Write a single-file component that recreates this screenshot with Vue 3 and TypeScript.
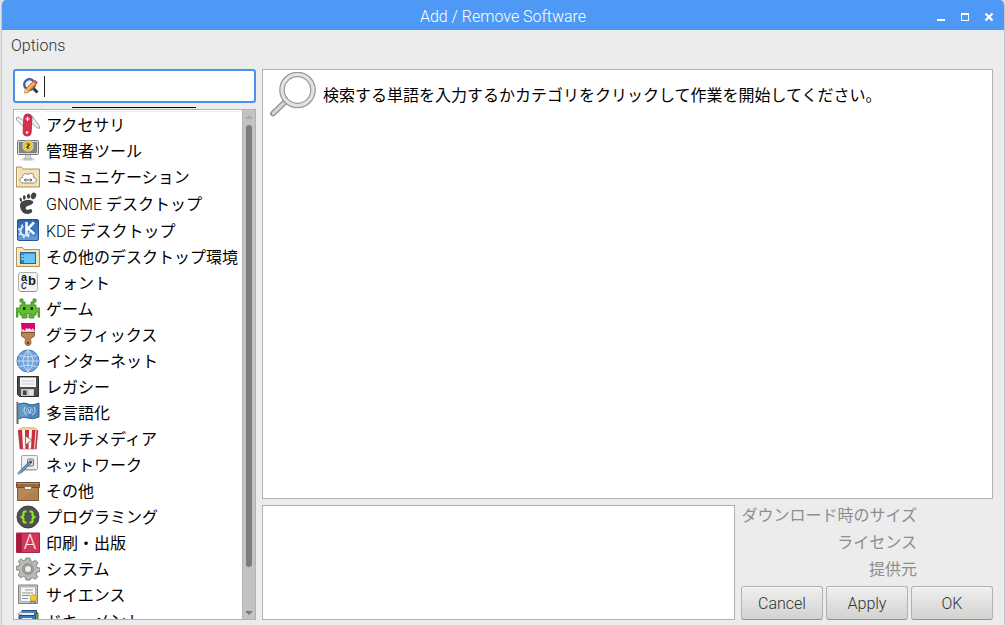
<script setup lang="ts">
import { ref } from 'vue'

interface Category {
  label: string
  icon: string
  prefix?: string
}

const query = ref('')

const categories: Category[] = [
  {
    label: 'アクセサリ',
    icon: `<path d="M.5 4.500 2 4l8 5v6l-4-2.500L.5 7z" fill="#eceeec" stroke="#8d918e" stroke-width=".8"/>
      <path d="M14 6l2-3 7.500 10v2.500l-3-1L14 9z" fill="#eceeec" stroke="#8d918e" stroke-width=".8"/>
      <rect x="7.500" y="1" width="8" height="22" rx="4" transform="rotate(3 11 12)" fill="#dc2f50" stroke="#9d213b" stroke-width=".8"/>
      <path d="M11.500 4v4M9.500 6h4" stroke="#fff" stroke-width="1.200"/><circle cx="11" cy="19.500" r="1.200" fill="#fff"/>`,
  },
  {
    label: '管理者ツール',
    icon: `<ellipse cx="12" cy="20.500" rx="7" ry="1.300" fill="#d2d2d2"/><path d="M9.500 15h5v3l1.500 2H8l1.500-2z" fill="#d5d8d4" stroke="#999" stroke-width=".6"/>
      <rect x="1.500" y="1.500" width="21" height="14" rx="1" fill="#d6d8d4" stroke="#777a76"/><rect x="3.500" y="3.500" width="17" height="10" fill="#80837f" stroke="#5c5f5b" stroke-width=".6"/>
      <circle cx="12" cy="7" r="5.800" fill="#e4e5df" stroke="#9a9c98" stroke-width=".6"/><circle cx="12" cy="7" r="4.300" fill="#f4d634" stroke="#bd9a0d" stroke-width=".7"/><path d="M10.500 5h2.500v1.500L11 8l.5 1h2" fill="none" stroke="#222" stroke-width="1.200"/>`,
  },
  {
    label: 'コミュニケーション',
    icon: `<path d="M.5 22v-20h5l1.500 2h16.500v18z" fill="#f3e2b7" stroke="#ae925c"/><path d="M1.500 21v-18" stroke="#fff5d9"/>
      <path d="M7 18c-4 0-4-5-.5-5.500 0-3.500 3-5 5.500-3 3-2.500 6.500-.5 5.500 3 4 .5 3.500 5.500 0 5.500z" fill="#fff" stroke="#8f8571"/><path d="M8.500 15h7.500M10 13.500 8.500 15l1.500 1.500M14.500 13.500 16 15l-1.500 1.500" fill="none" stroke="#555"/>`,
  },
  {
    label: 'デスクトップ',
    prefix: 'GNOME',
    icon: `<g fill="#414543"><ellipse cx="17.500" cy="3.800" rx="2.600" ry="3.400" transform="rotate(22 17.500 3.800)"/><ellipse cx="12.500" cy="4.300" rx="1.600" ry="2.500"/><ellipse cx="8.300" cy="5.500" rx="1.400" ry="2.200"/><ellipse cx="4.800" cy="7.700" rx="1.200" ry="2" transform="rotate(-15 4.800 7.700)"/>
      <path d="M15.500 8.500C9 7 3.500 9.500 4 14c.5 4.500 3 8 7.500 8 4.500 0 6.500-4 3-5-2 0-2.500 1.500-4 .5-2-1.500 0-3.500 2.500-4 4-1 6-4 2.500-5z"/></g>`,
  },
  {
    label: 'デスクトップ',
    prefix: 'KDE',
    icon: `<defs><linearGradient id="kde" x2="0" y2="1"><stop stop-color="#285da8"/><stop offset="1" stop-color="#649fdc"/></linearGradient></defs>
      <rect x="1.500" y=".5" width="21" height="21" rx="1.500" fill="url(#kde)" stroke="#275497"/>
      <circle cx="9" cy="12" r="4.500" fill="none" stroke="#e2ecf9" stroke-width="2"/><circle cx="9" cy="12" r="6.200" fill="none" stroke="#e2ecf9" stroke-width="1.800" stroke-dasharray="2 2.900"/>
      <path d="M10 2v13M18.500 2.500 12 9l8 6" fill="none" stroke="#3872b8" stroke-width="5"/><path d="M10.500 3v12M18 3.500l-6 6 6.500 5.500" fill="none" stroke="#fff" stroke-width="2.500"/>`,
  },
  {
    label: 'その他のデスクトップ環境',
    icon: `<path d="M.5 21.500v-19h6l1.500 2h15.500v17z" fill="#f3e2b7" stroke="#ae925c"/><path d="M1.500 20.500v-17" stroke="#fff5d9"/>
      <rect x="4.500" y="7.500" width="15" height="11" fill="#65c5fa" stroke="#27648d"/><path d="M4 8h16" stroke="#3c6b89"/><path d="M5 9h3v9H5z" fill="#2d84bc"/><path d="M5.500 11h2M5.500 14h2" stroke="#d7f2ff" stroke-width="1.400"/>`,
  },
  {
    label: 'フォント',
    icon: `<rect x="2.500" y="1.500" width="19" height="19" rx="2.500" fill="#f3f3f3" stroke="#b0b0b0"/><path d="M4 20.500h16" stroke="#969696"/>
      <text font-family="Liberation Sans, sans-serif" font-size="11" font-weight="bold" fill="#191919"><tspan x="5" y="10">a</tspan><tspan x="12" y="14" font-size="13">b</tspan><tspan x="5" y="18" font-size="12" font-weight="normal" font-style="italic">c</tspan></text>`,
  },
  {
    label: 'ゲーム',
    icon: `<path d="M4 2h3v3h2v3h6V5h2V2h3v3h-2v3h2v3h4v9h-2v-5h-2v3h-2v3h-5v-3h3v-1H8v1h3v3H6v-3H4v-3H2v5H0v-9h4V8h2V5H4z" fill="#62bd32" stroke="#378019" stroke-width=".8"/><path d="M7 10h2.500v3H7zM14.500 10H17v3h-2.500z" fill="#19370d"/>`,
  },
  {
    label: 'グラフィックス',
    icon: `<path d="M5.500 9.500h13v3c0 2-4 2-4 4l.5 3c0 4-6 4-6 0l.5-3c0-2-4-2-4-4z" fill="#ba854e" stroke="#7d5328" stroke-width=".8"/><circle cx="12" cy="20" r="1.200" fill="#5d3c1e"/>
      <path d="M5.500 1h13v8h-13z" fill="#f0e8dc" stroke="#9d7c50" stroke-width=".5"/><path d="M5 0h14v6l-1 2-1-3-2 2-1-2-2 1-2-1-1 3-2-2-1 1z" fill="#de006f"/><path d="M5 9.500h14" stroke="#735432"/>`,
  },
  {
    label: 'インターネット',
    icon: `<circle cx="12" cy="12" r="11" fill="#74a4df" stroke="#4b78b3"/><path d="M12 1v22M1 12h22M3 6.500q9 3 18 0M3 17.500q9-3 18 0M12 1q-10 11 0 22M12 1q10 11 0 22" fill="none" stroke="#cfe1f7" stroke-width=".9"/>`,
  },
  {
    label: 'レガシー',
    icon: `<path d="M1.500 1.500h21v20h-19l-2-2z" fill="#4c4d4c" stroke="#292a29"/><path d="M4 2h16v10H4z" fill="#f5f5f5"/><path d="M4 2h16v1H4z" fill="#aaa"/><path d="M5.500 6h13M5.500 9h13" stroke="#cacaca"/><path d="M5 14h13v7H5z" fill="#c5c7c3"/><path d="M7 15.500h3.500V20H7z" fill="#444"/><path d="M13 15h4v5h-4z" fill="#e4e5e2"/>`,
  },
  {
    label: '多言語化',
    icon: `<path d="M1.500 1v22" stroke="#60686c" stroke-width="2"/><path d="M3 3q5-2 9 0t11-1v14q-6 3-11 1t-9 1z" fill="#4d89bd" stroke="#2e638e"/><path d="M3 4q4-2 8 0v12q-4-1-8 1z" fill="#76add7" opacity=".5"/>
      <circle cx="13.500" cy="9.500" r="3" fill="none" stroke="#a8cbe5" stroke-width=".8"/><path d="M9 6q-3 5 2 8M18 6q3 5-2 8M12 8l1.500 4L15 8" fill="none" stroke="#d7e9f6" stroke-width=".9"/>`,
  },
  {
    label: 'マルチメディア',
    icon: `<path d="M3 4q0-3 3-3 2-2 4 0 2-2 4 0 2-2 4 0 3 0 3 3z" fill="#f4d58b" stroke="#bd9343" stroke-width=".6"/>
      <path d="m2 3 2 19h16l2-19z" fill="#fff3ef"/><path d="m2 3 2 19h3L6 3zM9 3l.5 19h3L13 3zM16 3l-1 19h3L19.500 3z" fill="#c92c3f"/><path d="M20.500 3 19 22h1.500L22 3z" fill="#c92c3f"/><path d="m2 3 2 19h16l2-19" fill="none" stroke="#9c5c53" stroke-width=".6"/>
      <path d="m9.500 9 6.500 4-6.500 5z" fill="#f3f0e8" stroke="#726a65" stroke-width=".8"/>`,
  },
  {
    label: 'ネットワーク',
    icon: `<rect x="5.500" y="2.500" width="16" height="14" rx="1" fill="#f0f1ee" stroke="#a4a7a1"/><path d="M6 17.500h15" stroke="#cecece"/><rect x="11.500" y="6" width="6" height="7" rx="1" fill="#dbdcd9" stroke="#777"/><circle cx="14.500" cy="9" r="1.500" fill="#444"/><path d="M14 9.500 4 19.500" fill="none" stroke="#315a91" stroke-width="3"/><path d="m14 9.500-10 10" fill="none" stroke="#79a4d4" stroke-width="1.400"/><path d="m5 18-3 3" stroke="#7d9cc4" stroke-width="2.500"/>`,
  },
  {
    label: 'その他',
    icon: `<path d="M1.500 8.500h21v13h-21z" fill="#b88956" stroke="#7d5835"/><path d="M.5 3.500h23v5H.5z" fill="#946b43" stroke="#6f4f30"/><path d="M1 4.500h22" stroke="#bd9264"/><path d="M8.500 7.500h7v3h-7z" fill="#f8f5ed" stroke="#795c40" stroke-width=".7"/><path d="m2 21 20-11v11z" fill="#a57645" opacity=".4"/>`,
  },
  {
    label: 'プログラミング',
    icon: `<circle cx="12" cy="12" r="11" fill="#505150" stroke="#3c3d3c"/><path d="M10.500 6.500H9q-1.500 0-1.500 1.500v2.500L5.500 12l2 1.500V16q0 1.500 1.500 1.500h1.500M13.500 6.500H15q1.500 0 1.500 1.500v2.500l2 1.500-2 1.500V16q0 1.500-1.500 1.500h-1.500" fill="none" stroke="#8ef020" stroke-width="2"/>`,
  },
  {
    label: '印刷・出版',
    icon: `<path d="M.5 2h23v19.500H.5z" fill="#d23656" stroke="#a82645"/><path d="M1 2.500h4V21H1z" fill="#ae193b"/><path d="M5 2.500V21" stroke="#861730"/><text x="14" y="18" text-anchor="middle" font-family="Roboto, sans-serif" font-weight="300" font-size="20" fill="#ffe4e8">A</text>`,
  },
  {
    label: 'システム',
    icon: `<path d="m10 1 4 0 .7 3 2 .9 2.800-1.700 2.400 2.600-1.600 2.700.8 2 3 .7v3.200l-3 .8-.9 2 1.600 2.800-2.500 2.300-2.700-1.500-2 .9L14 23h-4l-.7-2.900-2-.8-2.800 1.500L2.200 18l1.600-2.700-.8-2L0 12.600V9.500l3-.7.9-2L2.300 4.200 4.700 2l2.600 1.700 2-.8z" fill="#b8bab7" stroke="#6e716d" stroke-width=".8"/><circle cx="12" cy="12" r="5.500" fill="#a2a5a2" stroke="#7a7d79" stroke-width=".6"/><circle cx="12" cy="12" r="3.700" fill="#eceeea" stroke="#737672" stroke-width=".8"/>`,
  },
  {
    label: 'サイエンス',
    icon: `<path d="M2.500 2h19v18.500h-19z" fill="#c6c8c4" stroke="#80837e"/><path d="M4.500 4h15v14.500h-15z" fill="#f8f8f6" stroke="#9c9f9a" stroke-width=".7"/><path d="M9 7h8M6 10h11" stroke="#929591"/><path d="M6 12.500h8M6 15.500h6" stroke="#6f8fb5"/><path d="m15 16-1 4 3-1 3 2-1-5z" fill="#4e7ab3"/><circle cx="17.500" cy="15" r="3.300" fill="#f3cb31" stroke="#c8970e" stroke-width=".7"/>`,
  },
  {
    label: 'ドキュメント',
    icon: `<path d="M7 4h15v18H7z" fill="#6eae3f" stroke="#40732a"/><path d="M6 1.500h14.500V5l-14 1-2-2z" fill="#4a86c5" stroke="#204c80"/><path d="M2.500 6V4.500L6 2v4z" fill="#eef1f5" stroke="#777" stroke-width=".7"/><path d="M6 4h12v2H6z" fill="#eef1f5"/><path d="M3 6.500h16.500v17H3z" fill="#3c78b9" stroke="#204c80"/><path d="M6 9h10v3H6z" fill="#e4eefa"/>`,
  },
]

const details: string[] = ['ダウンロード時のサイズ', 'ライセンス', '提供元']
const actions: string[] = ['Cancel', 'Apply', 'OK']
</script>

<template>
  <div class="window">
    <header class="titlebar">
      <h1>Add / Remove Software</h1>
      <div class="controls">
        <button type="button" aria-label="Minimize">
          <svg width="10" height="10" viewBox="0 0 10 10"><path d="M1 7h8v2H1z" fill="#fff" /></svg>
        </button>
        <button type="button" aria-label="Maximize">
          <svg width="10" height="10" viewBox="0 0 10 10"><path d="M1 1h8v8H1zM2 3v5h6V3z" fill="#fff" fill-rule="evenodd" /></svg>
        </button>
        <button type="button" aria-label="Close">
          <svg width="10" height="10" viewBox="0 0 10 10"><path d="m1.500 1.500 7 7m0-7-7 7" stroke="#fff" stroke-width="2.200" /></svg>
        </button>
      </div>
    </header>

    <nav class="menubar"><button type="button">Options</button></nav>

    <main class="content">
      <aside class="sidebar">
        <label class="search">
          <svg width="18" height="18" viewBox="0 0 18 18" aria-hidden="true">
            <path d="m11 11 4.500 4.500" stroke="#323638" stroke-width="3" />
            <circle cx="7.500" cy="7.500" r="5.300" fill="#eef3fa" stroke="#253f83" stroke-width="2.200" />
            <circle cx="7.500" cy="7.500" r="5.600" fill="none" stroke="#6d91d1" stroke-width=".7" />
            <path d="m2.500 16 1-4 8-8 3 3-8 8z" fill="#f39a35" stroke="#a9561d" stroke-width=".8" />
            <path d="m11.500 4.500 2-1.500 2.500 2.500-1.500 1.500z" fill="#e5484d" />
            <path d="m5 13 7-7" stroke="#ffd28b" />
            <path d="m2.500 16 1-4 2.500 2.500z" fill="#f5d5a5" />
          </svg>
          <span class="caret"></span>
          <input v-model="query" type="text" aria-label="Search" />
        </label>
        <div class="rule"></div>
        <div class="listbox">
          <div class="list">
            <div class="list-head"><span></span><span></span></div>
            <ul>
              <li v-for="c in categories" :key="(c.prefix ?? '') + c.label" :class="{ mixed: c.prefix }">
                <svg width="24" height="24" viewBox="0 0 24 24" aria-hidden="true" v-html="c.icon"></svg>
                <span class="label"><span v-if="c.prefix" class="latin">{{ c.prefix + ' ' }}</span>{{ c.label }}</span>
              </li>
            </ul>
          </div>
          <div class="scrollbar">
            <svg width="8" height="4" viewBox="0 0 8 4"><path d="M0 4h8L4 0z" fill="#a8aaa9" /></svg>
            <div class="thumb"></div>
            <svg width="8" height="4" viewBox="0 0 8 4"><path d="M0 0h8L4 4z" fill="#777a79" /></svg>
          </div>
        </div>
      </aside>

      <section class="main">
        <div class="results">
          <svg width="48" height="48" viewBox="0 0 48 48" aria-hidden="true">
            <path d="M3 41.500 15 30" stroke="#858585" stroke-width="5.600" stroke-linecap="round" />
            <path d="M3 41.500 15.500 29.500" stroke="#d5d5d5" stroke-width="3.200" stroke-linecap="round" />
            <circle cx="27.500" cy="18" r="15.500" fill="none" stroke="#979797" stroke-width="5.600" />
            <circle cx="27.500" cy="18" r="15.500" fill="none" stroke="#e2e2e2" stroke-width="3.200" />
          </svg>
          <p>検索する単語を入力するかカテゴリをクリックして作業を開始してください。</p>
        </div>
        <div class="bottom">
          <div class="description"></div>
          <div class="side">
            <div class="details"><span v-for="d in details" :key="d">{{ d }}</span></div>
            <div class="actions">
              <button v-for="a in actions" :key="a" type="button">{{ a }}</button>
            </div>
          </div>
        </div>
      </section>
    </main>
  </div>
</template>

<style>
body {
  background: #e4e4e4;
}
</style>

<style scoped>
* {
  box-sizing: border-box;
}
.window {
  height: 100vh;
  margin-left: 1px;
  display: flex;
  flex-direction: column;
  overflow: hidden;
  background: #ececec;
  border: 1px solid #c6c6c6;
  border-width: 0 1px;
  border-radius: 5px 5px 0 0;
  font-family: Roboto, 'Noto Sans CJK JP', sans-serif;
  font-size: 16px;
  font-weight: 300;
  color: #000;
}
button {
  font: inherit;
  color: inherit;
  border: 0;
  padding: 0;
  background: none;
}
svg {
  display: block;
  flex: none;
}
.titlebar {
  flex: none;
  height: 30px;
  margin: 0 -1px;
  padding-top: 3px;
  display: grid;
  grid-template-columns: 1fr auto 1fr;
  align-items: center;
  background: #4e99f6;
  color: #fff;
}
h1 {
  grid-column: 2;
  margin: 0;
  font-size: 16px;
  font-weight: 300;
}
.controls {
  justify-self: end;
  display: flex;
  gap: 14px;
  padding-right: 11px;
}
.menubar {
  flex: none;
  height: 39px;
  padding: 5px 9px;
  color: #2e3436;
}
.menubar button {
  height: 21px;
}
.content {
  flex: 1;
  min-height: 0;
  display: flex;
  gap: 6px;
  padding: 0 11px 5px;
}
.sidebar {
  flex: none;
  width: 243px;
  display: flex;
  flex-direction: column;
}
.search {
  flex: none;
  height: 34px;
  display: flex;
  align-items: center;
  padding: 0 7px;
  border: 2px solid #4a90ee;
  border-radius: 3px;
  background: #fff;
}
.search input {
  flex: 1;
  min-width: 0;
  border: 0;
  outline: 0;
  padding: 0;
  background: none;
  font: inherit;
}
.caret {
  width: 1px;
  height: 21px;
  margin-left: 4px;
  background: #222;
}
.rule {
  flex: none;
  width: 124px;
  height: 1px;
  margin: 4px 0 1px 59px;
  background: #000;
}
.listbox {
  flex: 1;
  min-height: 0;
  display: flex;
  border: 1px solid #b0b2b0;
  background: #fff;
}
.list {
  flex: 1;
  min-width: 0;
  overflow: hidden;
  padding: 1px 1px 0 2px;
}
.list-head {
  display: grid;
  grid-template-columns: 25px 1fr;
  gap: 3px;
}
.list-head span {
  height: 1px;
  background: #ececec;
}
ul {
  margin: 0;
  padding: 0;
  list-style: none;
}
li {
  height: 26px;
  display: flex;
  align-items: center;
  gap: 6px;
  white-space: nowrap;
  line-height: 24px;
  font-weight: 400;
}
li.mixed {
  height: 27px;
}
.label {
  padding-top: 2px;
}
.latin {
  font-weight: 300;
  white-space: pre;
}
.scrollbar {
  flex: none;
  width: 13px;
  display: flex;
  flex-direction: column;
  align-items: center;
  padding: 5px 0 4px;
  border-left: 1px solid #b4b6b4;
  background: #c2c4c3;
}
.thumb {
  flex: 1;
  width: 6px;
  margin: 6px 0 44px;
  border-radius: 3px;
  background: #7a7d7c;
}
.main {
  flex: 1;
  min-width: 0;
  display: flex;
  flex-direction: column;
  gap: 6px;
}
.results,
.description {
  border: 1px solid #b0b2b0;
  background: #fff;
}
.results {
  flex: 1;
  min-height: 0;
  display: flex;
  align-items: flex-start;
  gap: 5px;
  padding: 2px 7px;
}
.results p {
  margin: 0;
  padding-top: 12px;
  line-height: 24px;
  font-weight: 400;
}
.bottom {
  flex: none;
  display: flex;
  gap: 6px;
}
.description {
  flex: 1;
}
.side {
  flex: none;
  width: 252px;
}
.details {
  display: flex;
  flex-direction: column;
  width: 176px;
  color: #8b8e8c;
}
.details span {
  align-self: flex-end;
  height: 27px;
  line-height: 22px;
  white-space: nowrap;
  font-weight: 400;
}
.actions {
  display: grid;
  grid-template-columns: repeat(3, 1fr);
  gap: 3px;
}
.actions button {
  height: 34px;
  border: 1px solid #b0b2af;
  border-bottom-color: #8f918e;
  border-radius: 3px;
  background: linear-gradient(#efefef, #d2d3d0);
  box-shadow: inset 0 1px #f8f8f8;
  color: #2e3436;
}
</style>
